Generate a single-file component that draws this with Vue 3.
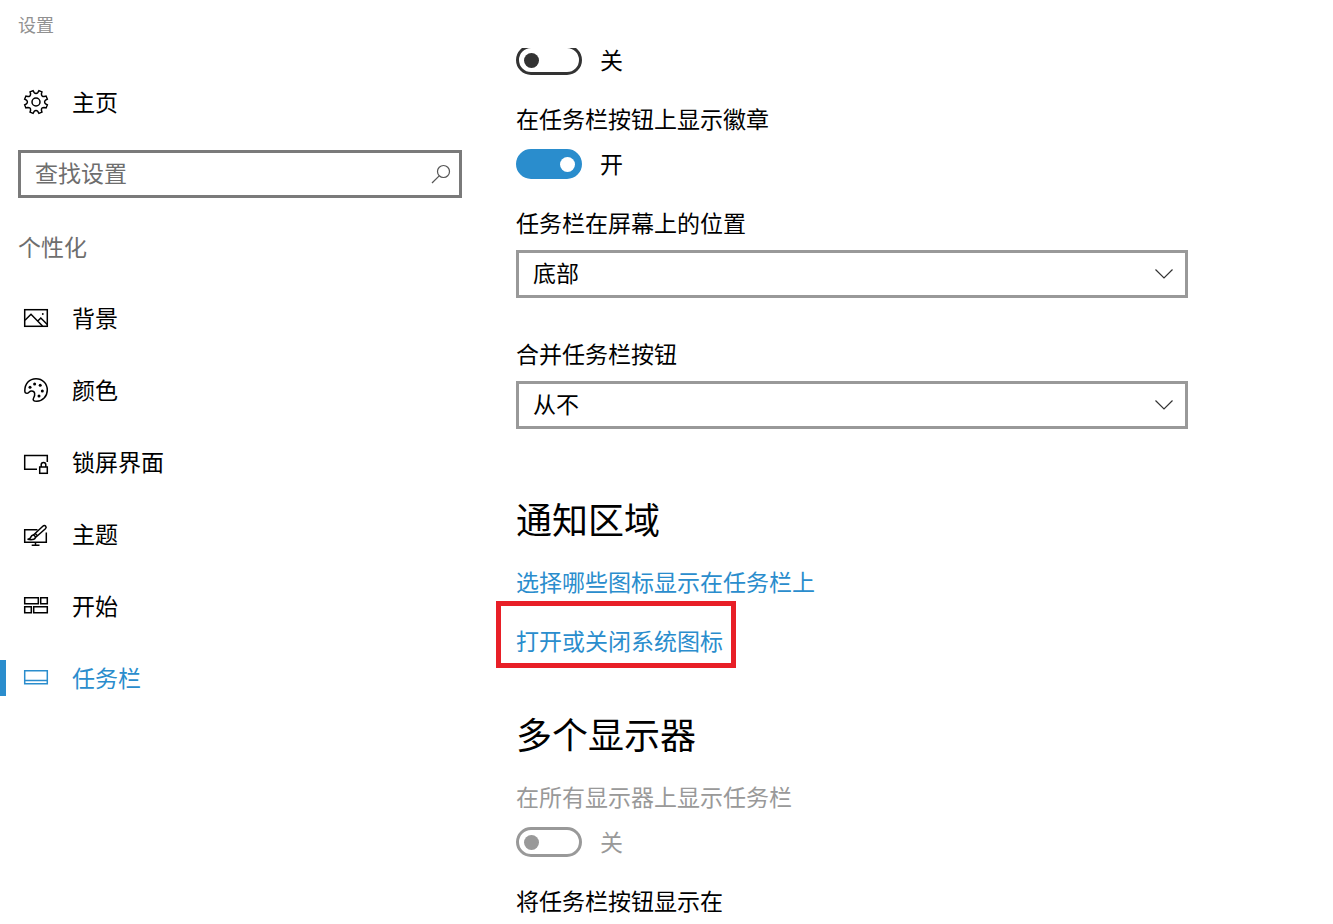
<script setup>
import { ref } from 'vue'

const search = ref('')
const showBadges = ref(true)
const position = ref('底部')
const combine = ref('从不')

const items = [
  { id: 'background', label: '背景' },
  { id: 'colors', label: '颜色' },
  { id: 'lock', label: '锁屏界面' },
  { id: 'themes', label: '主题' },
  { id: 'start', label: '开始' },
  { id: 'taskbar', label: '任务栏', active: true },
]

const paletteDots = [[6, 9.2], [10.6, 6], [16.2, 7.3], [18.3, 13], [15, 18]]

// Eight-toothed cog, drawn around the middle of a 24 x 24 box
function cogPath() {
  const at = (deg, r) => {
    const a = (deg * Math.PI) / 180
    return `${(12 + r * Math.cos(a)).toFixed(2)} ${(12 + r * Math.sin(a)).toFixed(2)}`
  }
  let d = ''
  for (let k = 0; k < 8; k++) {
    const a = 22.5 + 45 * k
    d += `${k ? 'L' : 'M'}${at(a - 11, 9.8)}L${at(a - 8, 11.7)}L${at(a + 8, 11.7)}L${at(a + 11, 9.8)}`
    d += `Q${at(a + 22.5, 7.6)} ${at(a + 34, 9.8)}`
  }
  return d + 'Z'
}
const cog = cogPath()
</script>

<template>
  <div class="window">
    <header class="titlebar">设置</header>
    <div class="body">
      <aside class="sidebar">
        <a class="nav-item" href="#home">
          <svg class="icon" viewBox="0 0 24 24" aria-hidden="true">
            <path :d="cog" /><circle cx="12" cy="12" r="4" />
          </svg>
          <span>主页</span>
        </a>
        <div class="search">
          <input v-model="search" type="text" placeholder="查找设置" aria-label="查找设置" />
          <svg class="search-icon" viewBox="0 0 20 20" aria-hidden="true">
            <circle cx="12.5" cy="7.5" r="6" /><path d="M8.2 11.8L1 19" />
          </svg>
        </div>
        <h2 class="group-title">个性化</h2>
        <nav>
          <a
            v-for="item in items"
            :key="item.id"
            class="nav-item"
            :class="{ active: item.active }"
            :href="'#' + item.id"
          >
            <svg class="icon" viewBox="0 0 24 24" aria-hidden="true">
              <template v-if="item.id === 'background'">
                <rect x=".7" y="3.7" width="22.6" height="16.6" />
                <path d="M1 14.2L7 8.2L18.5 20M13.5 15.2L16.8 12L23.3 18.5" />
                <circle class="dot" cx="18.8" cy="8" r=".9" />
              </template>
              <template v-else-if="item.id === 'colors'">
                <path d="M.8 12.8C.8 5.6 5.4.7 12 .7c6.5 0 11.3 4.8 11.3 11.3S18.4 23.3 12.800 23.300c-3.300 0-4.300-1.300-3.200-3.300 1.700-3.200 1.700-6.800-1.800-7-2.700-.2-2.800 2.300-4.800 2.300-1.500 0-2.200-1-2.200-2.500z" />
                <circle v-for="([x, y], i) in paletteDots" :key="i" class="dot" :cx="x" :cy="y" r="1.5" />
              </template>
              <template v-else-if="item.id === 'lock'">
                <path d="M13 19.3H.7V5.500h22.600v6.500" />
                <rect x="15.700" y="17" width="7.600" height="6.300" />
                <path d="M17.200 17v-2.300a2.300 2.300 0 0 1 4.600 0V17" />
              </template>
              <template v-else-if="item.id === 'themes'">
                <path d="M13.500 7.700H.7v12.600h21.600V10.500M11.500 20.300v3M7.700 23.300h7.800" />
                <path d="M3.500 17.300c2.500 0 3-.8 3.500-2.500.6-1.800 2.300-2.200 3.600-1.100 1.300 1.200.9 3.100-.8 3.600-2 .6-4.300.4-6.300 0zM9.200 13.200L18.800 4.200c1-.9 2.300-.7 2.900 0s.5 1.800-.3 2.600L11.500 15.500M11.200 11.500l2.200 2.200" />
              </template>
              <template v-else-if="item.id === 'start'">
                <path d="M.7 3.700h13.600v6H.7zM16.700 3.700h6.600v6h-6.600zM.7 12.700h6.600v6H.7zM9.700 12.700h13.600v6H9.700z" />
              </template>
              <template v-else>
                <path d="M.7 4.700h22.600v13H.7zM.7 14.500h22.600" />
              </template>
            </svg>
            <span>{{ item.label }}</span>
          </a>
        </nav>
      </aside>

      <main class="content">
        <div class="toggle-row first">
          <input id="peek" type="checkbox" role="switch" />
          <label for="peek">关</label>
        </div>

        <div class="field">
          <p id="badge-label">在任务栏按钮上显示徽章</p>
          <div class="toggle-row">
            <input id="badge" v-model="showBadges" type="checkbox" role="switch" aria-labelledby="badge-label" />
            <label for="badge">{{ showBadges ? '开' : '关' }}</label>
          </div>
        </div>

        <div class="field select-field">
          <label for="position">任务栏在屏幕上的位置</label>
          <div class="select">
            <select id="position" v-model="position"><option>底部</option></select>
            <svg class="chevron" viewBox="0 0 20 12" aria-hidden="true"><path d="M1.500 1.500L10 10l8.500-8.500" /></svg>
          </div>
        </div>

        <div class="field select-field">
          <label for="combine">合并任务栏按钮</label>
          <div class="select">
            <select id="combine" v-model="combine"><option>从不</option></select>
            <svg class="chevron" viewBox="0 0 20 12" aria-hidden="true"><path d="M1.500 1.500L10 10l8.500-8.500" /></svg>
          </div>
        </div>

        <section class="notify">
          <h1>通知区域</h1>
          <a class="link" href="#select-icons">选择哪些图标显示在任务栏上</a>
          <a class="link marked" href="#system-icons">打开或关闭系统图标</a>
        </section>

        <section class="displays">
          <h1>多个显示器</h1>
          <p id="all-label" class="muted">在所有显示器上显示任务栏</p>
          <div class="toggle-row">
            <input id="all" type="checkbox" role="switch" aria-labelledby="all-label" disabled />
            <label for="all" class="muted">关</label>
          </div>
          <p class="next">将任务栏按钮显示在</p>
        </section>
      </main>
    </div>
  </div>
</template>

<style>
body {
  margin: 0;
  background: #fff;
}
</style>

<style scoped>
.window {
  min-height: 100vh;
  font-family: "Noto Sans CJK SC", "Liberation Sans", sans-serif;
  font-size: 23px;
  line-height: 26px;
  color: #000;
}
.window * {
  box-sizing: border-box;
}
p,
h1,
h2 {
  margin: 0;
  font-weight: 400;
}
.titlebar {
  height: 48px;
  padding: 0 18px;
  font-size: 18px;
  line-height: 48px;
  color: #919191;
}
.body {
  display: grid;
  grid-template-columns: 480px minmax(0, 1fr);
}
.sidebar {
  padding-top: 18px;
}
.nav-item {
  position: relative;
  display: flex;
  align-items: center;
  gap: 24px;
  height: 72px;
  padding: 0 24px;
  color: inherit;
  text-decoration: none;
}
.nav-item span,
.toggle-row label {
  padding-bottom: 2px;
}
.nav-item.active {
  color: #2a8dcd;
}
.nav-item.active::before {
  content: "";
  position: absolute;
  left: 0;
  top: 18px;
  width: 6px;
  height: 36px;
  background: #2a8dcd;
}
.icon {
  width: 24px;
  height: 24px;
  overflow: visible;
  fill: none;
  stroke: currentColor;
  stroke-width: 1.5;
}
.icon .dot {
  fill: currentColor;
  stroke: none;
}
.search {
  display: flex;
  align-items: center;
  height: 48px;
  margin: 12px 18px 0;
  padding-right: 8px;
  border: 3px solid #7a7a7a;
}
.search input {
  flex: 1;
  min-width: 0;
  height: 42px;
  padding: 0 14px 4px;
  border: 0;
  outline: 0;
  background: none;
  font: inherit;
  color: #000;
}
.search input::placeholder {
  color: #6e6e6e;
  opacity: 1;
}
.search-icon {
  width: 20px;
  height: 20px;
  fill: none;
  stroke: #555;
  stroke-width: 1.2;
}
.group-title {
  padding: 35px 18px 23px;
  font-size: 23px;
  color: #6e6e6e;
}
.content {
  padding: 0 36px 7px;
}
.toggle-row {
  display: flex;
  align-items: center;
  gap: 18px;
  height: 30px;
}
.toggle-row.first {
  margin-top: -3px;
}
.toggle-row input {
  appearance: none;
  display: flex;
  align-items: center;
  width: 66px;
  height: 30px;
  margin: 0;
  padding: 0 5px;
  border: 3px solid #333;
  border-radius: 15px;
}
/* The first switch is scrolled partly under the title bar */
.toggle-row.first input {
  clip-path: inset(3px 0 0 0);
}
.toggle-row input::before {
  content: "";
  width: 15px;
  height: 15px;
  border-radius: 50%;
  background: #333;
}
.toggle-row input:checked {
  justify-content: flex-end;
  padding: 0 4px;
  border-color: #2a8dcd;
  background: #2a8dcd;
}
.toggle-row input:checked::before {
  background: #fff;
}
.toggle-row input:disabled {
  border-color: #999;
}
.toggle-row input:disabled::before {
  background: #999;
}
.muted {
  color: #999;
}
.field {
  margin-top: 30px;
}
.field .toggle-row,
.displays .toggle-row {
  margin-top: 18px;
}
.select-field > label {
  display: block;
}
.select-field + .select-field {
  margin-top: 42px;
}
.select {
  position: relative;
  max-width: 672px;
  margin-top: 15px;
}
.select select {
  appearance: none;
  display: block;
  width: 100%;
  height: 48px;
  padding: 0 48px 4px 14px;
  border: 3px solid #999;
  border-radius: 0;
  background: #fff;
  font: inherit;
  color: #000;
}
.chevron {
  position: absolute;
  right: 14px;
  top: 18px;
  width: 20px;
  height: 12px;
  fill: none;
  stroke: #333;
  stroke-width: 1.2;
  pointer-events: none;
}
h1 {
  margin-bottom: 29px;
  font-size: 36px;
  line-height: 42px;
}
.notify {
  display: flex;
  flex-direction: column;
  align-items: flex-start;
  margin-top: 68px;
}
.link {
  color: #2a8dcd;
  text-decoration: none;
}
.marked {
  position: relative;
  margin-top: 33px;
}
.marked::after {
  content: "";
  position: absolute;
  inset: -26px -13px -15px -20px;
  border: 5px solid #e81f27;
}
.displays {
  margin-top: 59px;
}
.next {
  margin-top: 30px;
}
</style>
